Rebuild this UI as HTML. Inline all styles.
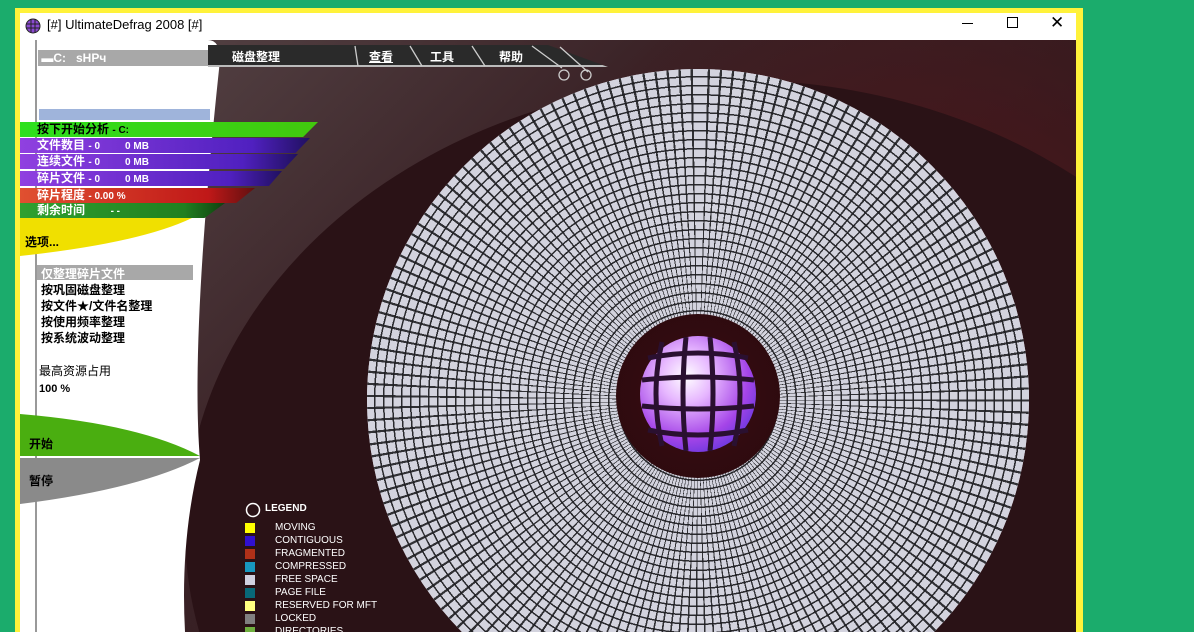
<!DOCTYPE html>
<html><head><meta charset="utf-8"><style>
*{margin:0;padding:0;box-sizing:border-box}
html,body{width:1194px;height:632px;overflow:hidden}
body{background:#1bac6c;position:relative;font-family:"Liberation Sans","Noto Sans CJK SC",sans-serif}
.win{position:absolute;left:15px;top:8px;width:1068px;height:624px;background:#fff23a;}
.title{position:absolute;left:20px;top:13px;width:1056px;height:27px;background:#fff;font-size:13px;color:#000}
.content{position:absolute;left:20px;top:40px;width:1056px;height:592px;overflow:hidden;background:#3a2226}
.abs{position:absolute}
.bar{position:absolute;left:0;height:15px;font-size:12px;font-weight:bold;color:#fff;padding-left:17px;line-height:15px;white-space:nowrap}
.leg{position:absolute;left:227px;font-size:10px;color:#fff;line-height:13px}
.leg i{position:absolute;left:-2px;top:2px;width:10px;height:10px}
.leg span{position:absolute;left:28px;white-space:nowrap}
.opt{position:absolute;left:21px;font-size:12px;font-weight:bold;color:#000;white-space:nowrap}
</style></head><body>
<div class="win"></div>
<div class="title">
 <svg class="abs" style="left:5px;top:5px" width="16" height="16" viewBox="0 0 16 16"><circle cx="8" cy="8" r="7" fill="#8a4ad0" stroke="#222"/><path d="M1 6H15M1 10H15M6 1V15M10 1V15" stroke="#222"/></svg>
 <span class="abs" style="left:27px;top:4px">[#] UltimateDefrag 2008 [#]</span>
 <div class="abs" style="left:942px;top:10px;width:11px;height:1px;background:#000"></div>
 <div class="abs" style="left:987px;top:4px;width:11px;height:11px;border:1px solid #000"></div>
 <span class="abs" style="left:1030px;top:0px;font-size:17px">✕</span>
</div>
<div class="content">
 <div class="abs" style="left:0;top:0;width:1056px;height:592px;background:radial-gradient(ellipse 400px 350px at 900px 250px,#4e1419,transparent),linear-gradient(135deg,#5a4a4c 0%,#3a2226 40%,#2a1418 100%)"></div>
 <div class="abs" style="left:165px;top:40px;width:1100px;height:900px;border-radius:50%;background:#2a1216"></div>
 <div class="abs" style="left:347px;top:29px;width:662px;height:662px;border-radius:50%;overflow:hidden">
  <div class="abs" style="left:0;top:0;width:662px;height:662px;background:repeating-radial-gradient(circle at center,#d3d3de 0 7.5px,#2a2a2e 7.5px 9px),#d3d3de"></div>
  <div class="abs" style="left:0;top:0;width:662px;height:662px;background:repeating-conic-gradient(from 0deg,transparent 0 1.7deg,rgba(30,30,34,.9) 1.7deg 2.1deg)"></div>
 </div>
 <div class="abs" style="left:596px;top:274px;width:164px;height:164px;border-radius:50%;background:radial-gradient(circle,#3a0c12,#2a0a0e)"></div>
 <div class="abs" style="left:620px;top:296px;width:116px;height:116px;border-radius:50%;background:radial-gradient(circle at 40% 35%,#fff 0,#e7b8ff 25%,#a545e8 60%,#4a30d8 90%)"></div>
 <svg class="abs" style="left:620px;top:296px" width="116" height="116" viewBox="0 0 116 116"><g stroke="#2a1030" stroke-width="5" fill="none"><path d="M8 22Q58 12 108 22M2 44Q58 38 114 44M2 70Q58 76 114 70M8 94Q58 104 108 94"/><path d="M22 6Q10 58 22 110M46 1Q40 58 46 115M70 1Q76 58 70 115M94 6Q106 58 94 110"/></g></svg>
 <svg class="abs" style="left:0;top:0" width="220" height="592" viewBox="0 0 220 592"><path d="M0 0H188Q200 0 200 20Q170 300 180 420Q160 500 165 592H0Z" fill="#fff"/></svg>
 <div class="abs" style="left:15px;top:0;width:2px;height:592px;background:#999"></div>
 <div class="abs" style="left:18px;top:10px;width:172px;height:16px;background:#a8a8a8;font-size:12px;font-weight:bold;color:#fff;line-height:16px">&nbsp;▬C: &nbsp; sHPч</div>
 <div class="abs" style="left:19px;top:69px;width:171px;height:11px;background:#9fb4db"></div>
 <div class="bar" style="top:82px;width:298px;background:linear-gradient(90deg,#2ee01e,#42c80e);clip-path:polygon(0 0,100% 0,95% 100%,0 100%);color:#000">按下开始分析 <span style="font-size:10px">- C:</span></div>
 <div class="bar" style="top:98px;width:290px;background:linear-gradient(90deg,#9040e0,#5020c0 80%,#201060);clip-path:polygon(0 0,100% 0,95% 100%,0 100%)">文件数目 <span style="font-size:10px">- 0 &nbsp; &nbsp; &nbsp; &nbsp; 0 MB</span></div>
 <div class="bar" style="top:114px;width:278px;background:linear-gradient(90deg,#9040e0,#5020c0 80%,#201060);clip-path:polygon(0 0,100% 0,95% 100%,0 100%)">连续文件 <span style="font-size:10px">- 0 &nbsp; &nbsp; &nbsp; &nbsp; 0 MB</span></div>
 <div class="bar" style="top:131px;width:262px;background:linear-gradient(90deg,#9040e0,#5020c0 80%,#201060);clip-path:polygon(0 0,100% 0,95% 100%,0 100%)">碎片文件 <span style="font-size:10px">- 0 &nbsp; &nbsp; &nbsp; &nbsp; 0 MB</span></div>
 <div class="bar" style="top:148px;width:235px;background:linear-gradient(90deg,#e05030,#c01818 80%,#601010);clip-path:polygon(0 0,100% 0,92% 100%,0 100%)">碎片程度 <span style="font-size:10px">- 0.00 %</span></div>
 <div class="bar" style="top:163px;width:205px;background:linear-gradient(90deg,#30a030,#208020 80%,#104010);clip-path:polygon(0 0,100% 0,90% 100%,0 100%)">剩余时间 <span style="font-size:10px">&nbsp; &nbsp; &nbsp; &nbsp; - -</span></div>
 <svg class="abs" style="left:0;top:178px" width="200" height="40"><path d="M0 0H172Q120 25 0 38Z" fill="#f0e000"/></svg>
 <div class="abs" style="left:5px;top:193px;font-size:12px;font-weight:bold">选项...</div>
 <div class="abs" style="left:17px;top:225px;width:156px;height:15px;background:#a8a8a8"></div>
 <div class="opt" style="top:225px;color:#fff">仅整理碎片文件</div>
 <div class="opt" style="top:241px">按巩固磁盘整理</div>
 <div class="opt" style="top:257px">按文件★/文件名整理</div>
 <div class="opt" style="top:273px">按使用频率整理</div>
 <div class="opt" style="top:289px">按系统波动整理</div>
 <div class="abs" style="left:19px;top:322px;font-size:12px">最高资源占用</div>
 <div class="abs" style="left:19px;top:343px;font-size:11px;font-weight:bold">100 %</div>
 <svg class="abs" style="left:0;top:374px" width="200" height="90"><path d="M0 0Q120 10 180 42H0Z" fill="#4aae10"/><path d="M0 44H180Q120 75 0 90Z" fill="#8a8a8a"/></svg>
 <div class="abs" style="left:9px;top:395px;font-size:12px;font-weight:bold">开始</div>
 <div class="abs" style="left:9px;top:432px;font-size:12px;font-weight:bold">暂停</div>
 <div class="abs" style="left:188px;top:5px;width:400px;height:22px;background:#2a2a2a;border-bottom:2px solid #bbb;clip-path:polygon(0 0,85% 0,100% 100%,0 100%)"></div>
 <div class="abs" style="left:212px;top:8px;font-size:12px;font-weight:bold;color:#fff">磁盘整理</div>
 <div class="abs" style="left:349px;top:8px;font-size:12px;font-weight:bold;color:#fff;text-decoration:underline">查看</div>
 <div class="abs" style="left:410px;top:8px;font-size:12px;font-weight:bold;color:#fff">工具</div>
 <div class="abs" style="left:479px;top:8px;font-size:12px;font-weight:bold;color:#fff">帮助</div>
 <svg class="abs" style="left:330px;top:4px" width="250" height="40"><g stroke="#ccc" stroke-width="1.3" fill="none"><path d="M5 2L8 22M60 2L72 22M122 2L135 22M182 2L212 24M210 3L238 28"/><circle cx="214" cy="31" r="5"/><circle cx="236" cy="31" r="5"/></g></svg>
 <svg class="abs" style="left:225px;top:462px" width="16" height="16"><circle cx="8" cy="8" r="6.5" stroke="#fff" stroke-width="1.5" fill="none"/></svg>
 <div class="abs" style="left:245px;top:463px;font-size:10px;font-weight:bold;color:#fff">LEGEND</div>
 <div class="leg" style="top:481px"><i style="background:#ffff00"></i><span>MOVING</span></div>
 <div class="leg" style="top:494px"><i style="background:#3010d0"></i><span>CONTIGUOUS</span></div>
 <div class="leg" style="top:507px"><i style="background:#b03018"></i><span>FRAGMENTED</span></div>
 <div class="leg" style="top:520px"><i style="background:#1898c0"></i><span>COMPRESSED</span></div>
 <div class="leg" style="top:533px"><i style="background:#d0d0e0"></i><span>FREE SPACE</span></div>
 <div class="leg" style="top:546px"><i style="background:#086878"></i><span>PAGE FILE</span></div>
 <div class="leg" style="top:559px"><i style="background:#ffff80"></i><span>RESERVED FOR MFT</span></div>
 <div class="leg" style="top:572px"><i style="background:#808080"></i><span>LOCKED</span></div>
 <div class="leg" style="top:585px"><i style="background:#70b040"></i><span>DIRECTORIES</span></div>
</div>
</body></html>
